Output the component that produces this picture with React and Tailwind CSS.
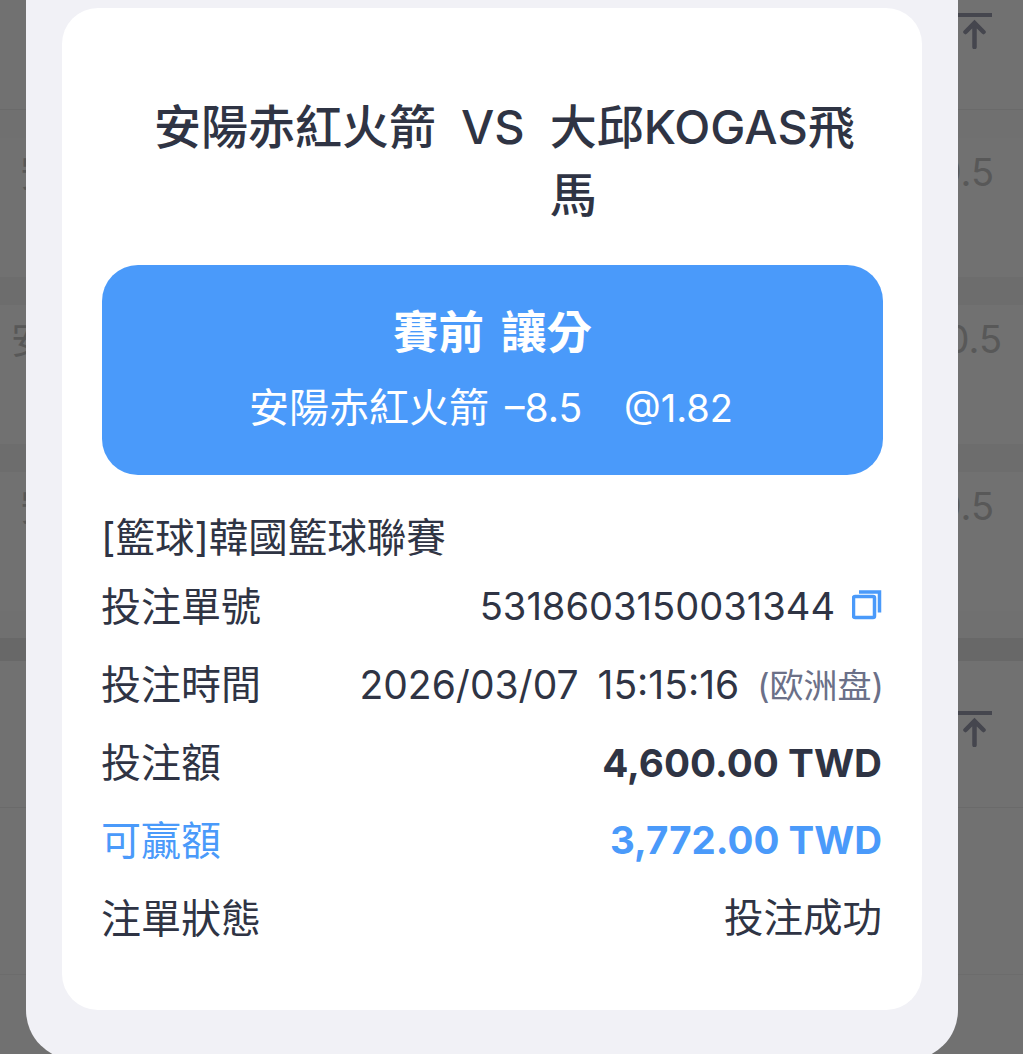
const font = { fontFamily: '"Inter", "Noto Sans CJK TC", sans-serif' }

function TopIcon() {
  return (
    <svg width="34" height="36" viewBox="0 0 34 36" fill="none" stroke="currentColor">
      <path d="M0 2h34" strokeWidth="4" />
      <path d="M16.5 34V10M7.5 19l9-9 9 9" strokeWidth="4.5" strokeLinecap="round" />
    </svg>
  )
}

function BgRow({ left, right, leftClass, rightClass, bandClass = 'bg-[#6d6d6d]' }) {
  return (
    <div className="h-[167px]">
      <div className={`h-[28px] ${bandClass}`} />
      <div className="flex items-center justify-between pt-[12px] text-[#585858] text-[38px] leading-[44px]">
        <span className={leftClass}>{left}</span>
        <span className={rightClass}>{right}</span>
      </div>
    </div>
  )
}

function Row({ label, children, labelClass = 'text-[#2f3444]' }) {
  return (
    <div className="h-[78px] flex items-center justify-between">
      <span className={`text-[40px] ${labelClass}`}>{label}</span>
      {children}
    </div>
  )
}

export default function App() {
  return (
    <div className="relative w-[1023px] h-[1054px] overflow-hidden bg-[#717171]" style={font}>
      {/* dimmed page behind the sheet */}
      <div className="h-[110px] border-b border-[#6a6a6a] flex justify-end pr-[31px] pt-[13px] text-[#45464e]">
        <TopIcon />
      </div>
      <BgRow left="安" right="9.5" leftClass="ml-[20px]" rightClass="mr-[29px]" bandClass="bg-[#707070]" />
      <BgRow left="安" right="10.5" leftClass="ml-[11px]" rightClass="mr-[21px]" />
      <BgRow left="安" right="9.5" leftClass="ml-[20px]" rightClass="mr-[29px]" />
      <div className="h-[27px] bg-[#707070]" />
      <div className="h-[23px] bg-[#686868]" />
      <div className="h-[147px] border-b border-[#6a6a6a] flex justify-end pr-[31px] pt-[50px] text-[#45464e]">
        <TopIcon />
      </div>
      <div className="h-[167px] border-b border-[#6c6c6c]" />

      {/* bet detail sheet */}
      <div className="absolute left-[26px] top-[-60px] w-[932px] h-[1120px] rounded-[50px] bg-[#f1f1f6] px-[36px] pt-[68px]">
        <div className="h-[1002px] rounded-[36px] bg-white pl-[40px] pr-[39px] pt-[85px]">
          <div className="flex gap-[25px] pl-[52px] text-[47px] leading-[68px] font-medium text-[#2f3444]">
            <span className="shrink-0">安陽赤紅火箭</span>
            <span className="shrink-0">VS</span>
            <span className="w-[310px]">大邱KOGAS飛馬</span>
          </div>

          <div className="mt-[36px] h-[210px] rounded-[36px] bg-[#4a9afa] flex flex-col items-center text-white">
            <div className="mt-[40px] text-[45.5px] leading-[56px] font-bold [word-spacing:6px]">賽前 讓分</div>
            <div className="mt-[22px] mr-[3px] flex text-[40px] leading-[50px]">
              <span>安陽赤紅火箭</span>
              <span className="ml-[16px] text-[39px]">–8.5</span>
              <span className="ml-[42px] text-[38px]">@1.82</span>
            </div>
          </div>

          <div className="-ml-px mr-px">
            <div className="mt-[34px] text-[39.5px] leading-[59px] text-[#2f3444]">[籃球]韓國籃球聯賽</div>

            <Row label="投注單號">
              <div className="flex items-center gap-[17px]">
                <span className="text-[38.1px] text-[#2f3444]">5318603150031344</span>
                <svg width="30" height="30" viewBox="0 0 30 30" fill="none" className="mb-[4px] text-[#4a9afa]">
                  <rect x="1.5" y="6.5" width="21" height="21" rx="1.5" stroke="currentColor" strokeWidth="3.5" />
                  <path d="M7 2h20.5v20.5" stroke="currentColor" strokeWidth="3.5" />
                </svg>
              </div>
            </Row>
            <Row label="投注時間">
              <div className="flex items-center gap-[18px]">
                <span className="text-[39px] text-[#2f3444] [word-spacing:8px]">2026/03/07 15:15:16</span>
                <span className="-mr-[2px] text-[34px] text-[#6b7088]">(欧洲盘)</span>
              </div>
            </Row>
            <Row label="投注額">
              <span className="text-[38.7px] font-bold text-[#2f3444]">4,600.00 TWD</span>
            </Row>
            <Row label="可贏額" labelClass="text-[#4a9afa]">
              <span className="text-[38.5px] font-bold text-[#4a9afa]">3,772.00 TWD</span>
            </Row>
            <Row label="注單狀態">
              <span className="text-[39.5px] text-[#2f3444]">投注成功</span>
            </Row>
          </div>
        </div>
      </div>
    </div>
  )
}
